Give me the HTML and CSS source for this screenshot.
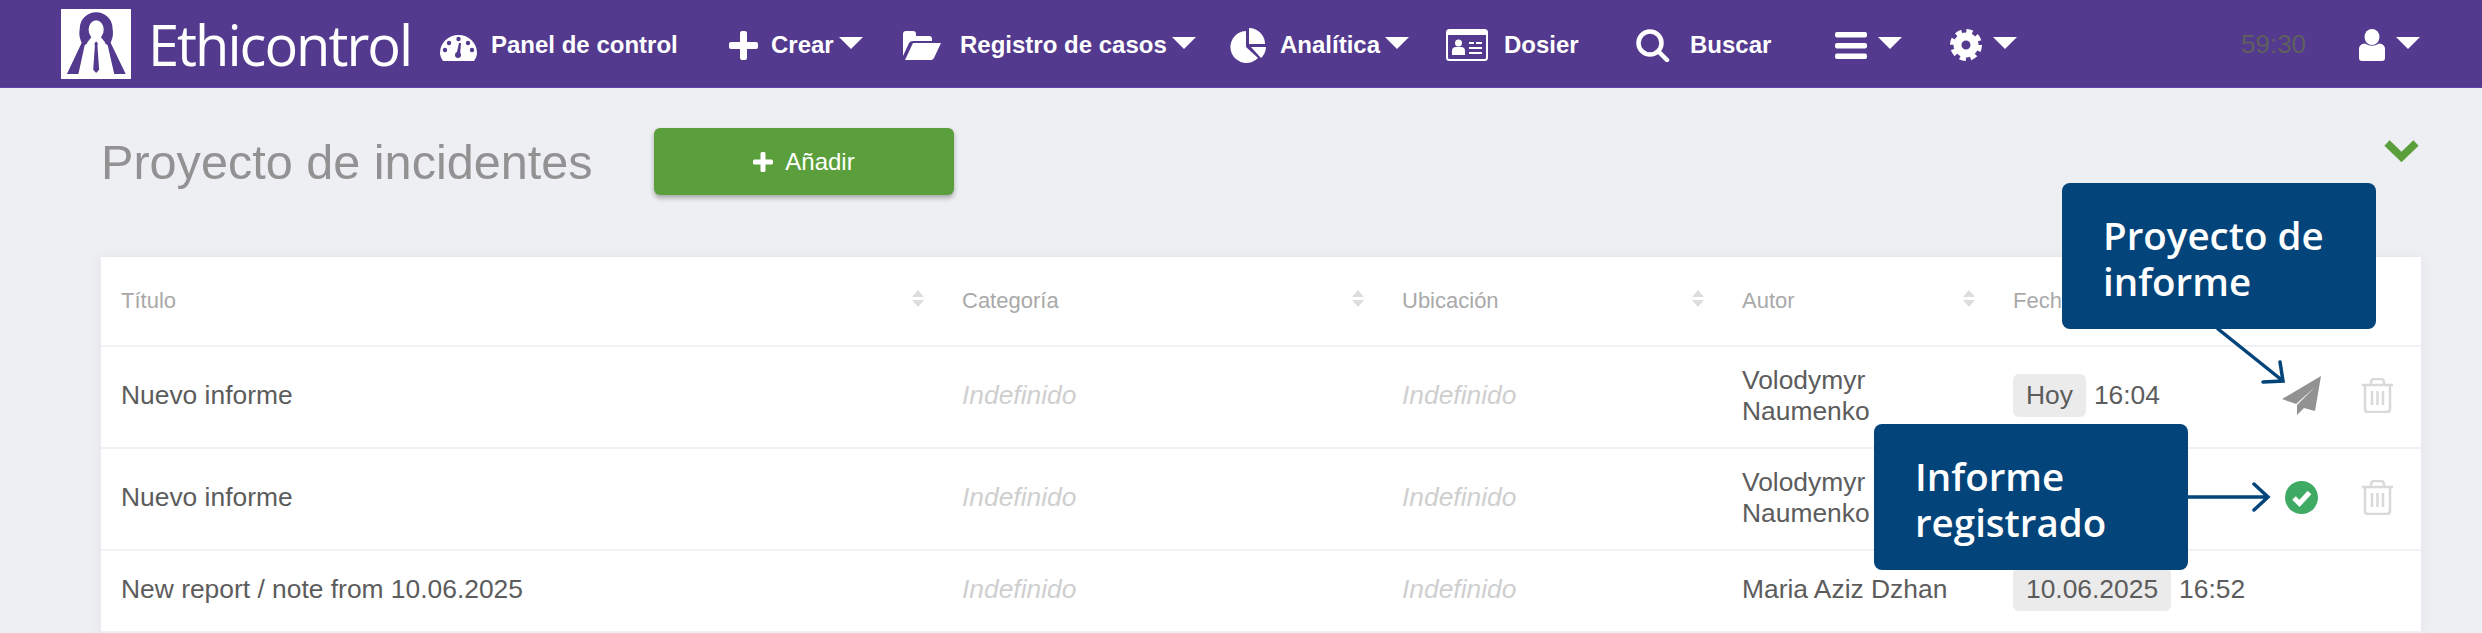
FILE: index.html
```html
<!DOCTYPE html>
<html lang="es">
<head>
<meta charset="utf-8">
<title>Ethicontrol</title>
<link rel="stylesheet" href="styles.css">
</head>
<body>
<div class="page">
  <header class="topbar">
    <a class="brand">
      <svg class="brand-mark" viewBox="15 15 213 213"><rect x="15" y="15" width="213" height="213" fill="#fff"/><path fill="#533a8e" d="M33 213 78 118C70 100 70 90 72 75A50 50 0 0 1 172 75C174 90 174 100 166 118L212 213H177L157 125Q140 112 122 108 104 112 87 125L68 213Z"/><ellipse cx="122" cy="78" rx="23" ry="29" fill="#fff"/><path fill="#fff" d="M110 98H134L150 118 122 125 94 118Z"/><path fill="#533a8e" d="M122 113 127 120 126 128 131 200 122 210 113 200 118 128 117 120Z"/></svg>
      <span class="brand-name">Ethicontrol</span>
    </a>
    <a class="nav-item gap-panel">
      <svg class="ic-dash" viewBox="0 0 37 26"><path fill="#fff" d="M3 26C1 23 0 20 0 18A18.500 18 0 0 1 37 18C37 20 36 23 34 26Z"/><g fill="#533a8e"><circle cx="9" cy="8" r="2.200"/><circle cx="18.500" cy="4" r="2.200"/><circle cx="28" cy="8" r="2.200"/><circle cx="5" cy="15" r="2.200"/><circle cx="32" cy="15" r="2.200"/><circle cx="18" cy="20" r="3"/><path d="M16.500 19 19 8H21L20 20Z"/></g></svg>
      <span>Panel de control</span>
    </a>
    <a class="nav-item gap-crear">
      <svg class="ic-plus" viewBox="0 0 29 29"><path fill="#fff" d="M11 2Q11 0 13 0H16Q18 0 18 2V11H27Q29 11 29 13V16Q29 18 27 18H18V27Q18 29 16 29H13Q11 29 11 27V18H2Q0 18 0 16V13Q0 11 2 11H11Z"/></svg>
      <span>Crear</span><i class="caret"></i>
    </a>
    <a class="nav-item gap-reg">
      <svg class="ic-folder" viewBox="0 0 38 29"><path fill="#fff" d="M0 3Q0 0 3 0H10Q13 0 13 3V5H26Q29 5 29 8V10H10Q7 10 6 12L0 25Z"/><path fill="#fff" d="M10 12H38L31 27Q30 29 28 29H2Z"/></svg>
      <span>Registro de casos</span><i class="caret"></i>
    </a>
    <a class="nav-item gap-ana">
      <svg class="ic-pie" viewBox="0 0 36 35"><path fill="#fff" d="M16 3V19L28 30A16 16 0 1 1 16 3Z"/><path fill="#fff" d="M19 0A16 16 0 0 1 35 16H19Z"/><path fill="#fff" d="M21 19H36A16 16 0 0 1 31 30Z"/></svg>
      <span>Analítica</span><i class="caret"></i>
    </a>
    <a class="nav-item gap-dos">
      <svg class="ic-card" viewBox="0 0 42 32"><rect x="1" y="1" width="40" height="30" rx="2.500" fill="none" stroke="#fff" stroke-width="2"/><rect x="1" y="1" width="40" height="5" fill="#fff"/><circle cx="12.500" cy="14" r="3.500" fill="#fff"/><path fill="#fff" d="M6 26V22Q6 18 10 18H15Q19 18 19 22V26Z"/><path stroke="#fff" stroke-width="2" d="M23 14H28M30 14H36M23 19H36M23 24H36"/></svg>
      <span>Dosier</span>
    </a>
    <a class="nav-item gap-bus">
      <svg class="ic-search" viewBox="0 0 34 33"><circle cx="14" cy="14" r="11.500" fill="none" stroke="#fff" stroke-width="4.500"/><path d="M23 23 31 31" stroke="#fff" stroke-width="4.500" stroke-linecap="round"/></svg>
      <span>Buscar</span>
    </a>
    <a class="nav-item gap-menu">
      <svg class="ic-menu" viewBox="0 0 32 27"><g fill="#fff"><rect width="32" height="5.500" rx="2"/><rect y="11" width="32" height="5.500" rx="2"/><rect y="21.500" width="32" height="5.500" rx="2"/></g></svg>
      <i class="caret"></i>
    </a>
    <a class="nav-item gap-menu">
      <svg class="ic-gear" viewBox="0 0 32 32"><circle cx="16" cy="16" r="13.500" fill="none" stroke="#fff" stroke-width="5" stroke-dasharray="6 4.600"/><circle cx="16" cy="16" r="8.500" fill="none" stroke="#fff" stroke-width="8"/></svg>
      <i class="caret"></i>
    </a>
    <span class="timer">59:30</span>
    <a class="nav-item gap-menu">
      <svg class="ic-user" viewBox="0 0 26 32"><ellipse cx="13" cy="8" rx="7.500" ry="8" fill="#fff"/><path fill="#fff" d="M0 20Q0 15 6 14.500 13 19 20 14.500 26 15 26 20V29Q26 32 23 32H3Q0 32 0 29Z"/></svg>
      <i class="caret"></i>
    </a>
  </header>

  <main class="content">
    <div class="toolbar">
      <h1 class="page-title">Proyecto de incidentes</h1>
      <button class="add-btn"><svg class="ic-add" viewBox="0 0 20 20"><path fill="#fff" d="M7.500 1.500Q7.500 0 9 0H11Q12.500 0 12.500 1.500V7.500H18.500Q20 7.500 20 9V11Q20 12.500 18.500 12.500H12.500V18.500Q12.500 20 11 20H9Q7.500 20 7.500 18.500V12.500H1.500Q0 12.500 0 11V9Q0 7.500 1.500 7.500H7.500Z"/></svg>Añadir</button>
      <svg class="ic-chevron" viewBox="0 0 35 23"><path d="M3 4 17.500 18 32 4" fill="none" stroke="#5a9f3b" stroke-width="7.500"/></svg>
    </div>

    <section class="card">
      <div class="row head">
        <div class="cell"><span>Título</span><i class="sort"></i></div>
        <div class="cell"><span>Categoría</span><i class="sort"></i></div>
        <div class="cell"><span>Ubicación</span><i class="sort"></i></div>
        <div class="cell"><span>Autor</span><i class="sort"></i></div>
        <div class="cell"><span>Fecha</span></div>
        <div class="cell"></div>
      </div>
      <div class="row tall">
        <div class="cell">Nuevo informe</div>
        <div class="cell muted">Indefinido</div>
        <div class="cell muted">Indefinido</div>
        <div class="cell author">Volodymyr Naumenko</div>
        <div class="cell date"><span class="tag">Hoy</span>16:04</div>
        <div class="cell actions">
          <svg class="ic-plane" viewBox="0 0 39 39"><path fill="#929292" d="M39 0 0 23 14 28 33 11 15 29V39L22 32 33 35Z"/></svg>
          <svg class="ic-trash" viewBox="0 0 31 35"><path fill="none" stroke="#d9d9d9" stroke-width="2.500" d="M0 7H31M9 7V4Q9 1 12 1H19Q22 1 22 4V7M3 7V31Q3 34 6 34H25Q28 34 28 31V7M10 13V27M15.500 13V27M21 13V27"/></svg>
        </div>
      </div>
      <div class="row tall">
        <div class="cell">Nuevo informe</div>
        <div class="cell muted">Indefinido</div>
        <div class="cell muted">Indefinido</div>
        <div class="cell author">Volodymyr Naumenko</div>
        <div class="cell date"><span class="tag">Hoy</span>16:04</div>
        <div class="cell actions">
          <svg class="ic-check" viewBox="0 0 33 33"><circle cx="16.500" cy="16.500" r="16.500" fill="#3eaa63"/><path d="M9 17 14.500 22.500 24.500 11.500" fill="none" stroke="#fff" stroke-width="5"/></svg>
          <svg class="ic-trash" viewBox="0 0 31 35"><path fill="none" stroke="#d9d9d9" stroke-width="2.500" d="M0 7H31M9 7V4Q9 1 12 1H19Q22 1 22 4V7M3 7V31Q3 34 6 34H25Q28 34 28 31V7M10 13V27M15.500 13V27M21 13V27"/></svg>
        </div>
      </div>
      <div class="row short">
        <div class="cell">New report / note from 10.06.2025</div>
        <div class="cell muted">Indefinido</div>
        <div class="cell muted">Indefinido</div>
        <div class="cell">Maria Aziz Dzhan</div>
        <div class="cell date"><span class="tag">10.06.2025</span>16:52</div>
        <div class="cell"></div>
      </div>
    </section>
  </main>

  <div class="callout callout-draft">Proyecto de informe</div>
  <div class="callout callout-done">Informe registrado</div>
  <svg class="callout-arrows" viewBox="0 0 100 190"><path fill="none" stroke="#03447a" stroke-width="3.500" stroke-linecap="round" d="M30 0 95 52M92 33 95 52 75 53M0 168H80M66 155 80 168 66 181"/></svg>
</div>
</body>
</html>
```
FILE: styles.css
```css
* { box-sizing: border-box; }
html, body { margin: 0; height: 633px; overflow: hidden; }
body { background: #edeff3; font-family: "Liberation Sans", Arial, sans-serif; color: #5a5a5a; }
.page { position: relative; height: 633px; overflow: hidden; }

.topbar {
  height: 88px; padding-left: 61px; background: #533a8e;
  border-bottom: 1px solid #5f45a8;
  display: grid; align-items: center;
  grid-template-columns: 379px 289px 174px 327px 216px 190px 199px 115px 291px 118px 1fr;
  color: #fff; font-size: 24px; font-weight: 700;
}
.brand { display: flex; align-items: center; gap: 17px; }
.brand-mark { width: 70px; height: 70px; display: block; }
.brand-name { font-family: "Open Sans", sans-serif; font-weight: 400; font-size: 56px; letter-spacing: -2px; line-height: 70px; }
.nav-item { display: flex; align-items: center; margin-top: 3px; }
.gap-panel { gap: 14px; }
.gap-crear { gap: 13px; }
.gap-reg { gap: 19px; }
.gap-ana { gap: 14px; }
.gap-dos { gap: 16px; }
.gap-bus { gap: 20px; }
.gap-menu { gap: 11px; }
.caret { width: 0; height: 0; margin-top: -4px; border: 12px solid transparent; border-bottom: 0; border-top: 12px solid #fff; }
.gap-crear .caret { margin-left: -8px; }
.gap-reg .caret { margin-left: -14px; }
.gap-ana .caret { margin-left: -9px; }
.ic-dash { width: 37px; height: 26px; margin-top: 6px; }
.ic-plus { width: 29px; height: 29px; }
.ic-folder { width: 38px; height: 29px; }
.ic-pie { width: 36px; height: 35px; }
.ic-card { width: 42px; height: 32px; }
.ic-search { width: 34px; height: 33px; }
.ic-menu { width: 32px; height: 27px; }
.ic-gear { width: 32px; height: 32px; }
.ic-user { width: 26px; height: 32px; }
.timer { font-weight: 400; font-size: 26px; color: #5f5f5f; margin-top: 2px; }

.content { padding: 40px 61px 0 101px; }
.toolbar { display: flex; align-items: center; height: 67px; }
.page-title { margin: 0; width: 553px; font-size: 48.600px; font-weight: 400; color: #929292; line-height: 67px; position: relative; top: 1px; }
.add-btn {
  width: 300px; height: 67px; border: 0; border-radius: 6px;
  background: #5a9f3b; color: #fff; font: 24px "Liberation Sans", Arial, sans-serif;
  box-shadow: 0 3px 5px rgba(0,0,0,.3);
  display: flex; align-items: center; justify-content: center; gap: 12px;
}
.ic-add { width: 20px; height: 20px; }
.ic-chevron { width: 35px; height: 23px; margin-left: auto; margin-right: 2px; margin-top: -22px; }

.card { margin-top: 62px; background: #fff; box-shadow: 0 0 14px rgba(0,0,0,.05); }
.row {
  display: grid; grid-template-columns: 841px 440px 340px 271px 269px 1fr;
  padding-left: 20px; align-items: center; border-bottom: 2px solid #f0f0f5;
  font-size: 26.400px; color: #5c5c5c;
}
.head { height: 90px; font-size: 22px; color: #a9a9a9; }
.tall { height: 102px; padding-bottom: 3px; }
.short { height: 82px; padding-bottom: 3px; }
.cell { display: flex; align-items: center; }
.head .cell { justify-content: space-between; padding-right: 38px; }
.muted { color: #cfcfcf; font-style: italic; }
.author { display: block; line-height: 31px; width: 180px; }
.date { gap: 8px; }
.tag { background: #ebebeb; border-radius: 6px; padding: 0 13px; line-height: 43px; }
.actions { gap: 41px; }
.sort { width: 12px; height: 17px; display: flex; flex-direction: column; justify-content: space-between; position: relative; top: -3px; }
.sort::before, .sort::after { content: ""; border-left: 6px solid transparent; border-right: 6px solid transparent; }
.sort::before { border-bottom: 7px solid #ddd; }
.sort::after { border-top: 7px solid #ddd; }
.ic-plane { width: 39px; height: 39px; }
.ic-check { width: 33px; height: 33px; margin-left: 3px; margin-right: 3px; }
.ic-trash { width: 31px; height: 35px; }

.callout {
  position: absolute; width: 314px; height: 146px; border-radius: 8px;
  background: #03447a; color: #fff; padding: 29px 41px 0;
  font-family: "Open Sans", sans-serif; font-weight: 600; font-size: 38.500px; line-height: 46px;
}
.callout-draft { left: 2062px; top: 183px; }
.callout-done { left: 1874px; top: 424px; padding-right: 80px; }
.callout-arrows { position: absolute; left: 2188px; top: 329px; width: 100px; height: 190px; }
```
